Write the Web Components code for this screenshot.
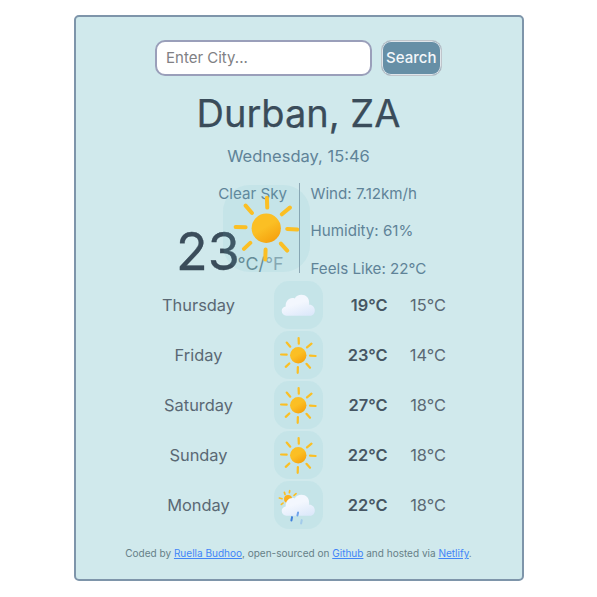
<!DOCTYPE html>
<html lang="en">
<head>
<meta charset="utf-8">
<title>Weather</title>
<style>
body{margin:0;background:#fff;font-family:Inter,"Liberation Sans",sans-serif;color:#5f8398}
</style>
</head>
<body>
<weather-app></weather-app>
<script>
const el = (name, html, setup) => customElements.define(name, class extends HTMLElement {
  constructor() {
    super();
    this.attachShadow({ mode: 'open' });
  }
  connectedCallback() {
    this.shadowRoot.innerHTML = html;
    if (setup) setup(this, this.shadowRoot);
  }
});

const rays = 'M132 38L133 68M201 68L177 88M193 132L223 134M174 176L193 197M128 194L127 224M82 174L63 192M68 127L38 126M68 62L87 84';
const cloud = 'M37 104C29 104 23 98 23 90C23 82 28 77 35 76C34 62 43 51 55 51C58 51 60 51 62 52C66 45 73 41 82 41C96 41 105 51 105 64L105 71C114 70 122 78 122 88C122 98 115 104 107 104Z';
const icons = {
  sun: `<svg viewBox="0 0 260 260"><defs><linearGradient id="s" x1=".2" y1="0" x2=".8" y2="1"><stop offset=".45" stop-color="#fbbf24"/><stop offset="1" stop-color="#f59e0b"/></linearGradient></defs><circle cx="130" cy="130" r="44" fill="url(#s)"/><path d="${rays}" fill="none" stroke="#fbbf24" stroke-width="12" stroke-linecap="round"/></svg>`,
  cloud: `<svg viewBox="0 0 145 145"><defs><linearGradient id="c" x1=".3" y1="0" x2=".8" y2="1"><stop offset=".4" stop-color="#f3f7fe"/><stop offset="1" stop-color="#dce8fa"/></linearGradient></defs><path d="${cloud}" fill="url(#c)"/></svg>`,
  rain: `<svg viewBox="0 0 145 145"><defs><linearGradient id="c" x1=".3" y1="0" x2=".8" y2="1"><stop offset=".4" stop-color="#f3f7fe"/><stop offset="1" stop-color="#dce8fa"/></linearGradient></defs><circle cx="42" cy="54" r="12" fill="#fbb01c"/><path d="M47 29L46 35M31 34L33 40M66 38L60 43M16 51L24 53M27 66L22 70" fill="none" stroke="#fbbf24" stroke-width="5" stroke-linecap="round"/><path d="${cloud}" fill="url(#c)"/><g fill="none" stroke-width="6" stroke-linecap="round"><path d="M54 108L52 118" stroke="#3f7fdc"/><path d="M72 94L70 103" stroke="#6ea4ea"/><path d="M83 117L81 127" stroke="#a3cbea"/></g></svg>`
};

el('weather-icon', `<style>
:host{display:block;width:48.5px;height:48.5px;border-radius:31%;background:rgba(110,190,198,.11)}
svg{display:block;width:100%;height:100%}
</style><div></div>`, (host, root) => {
  root.querySelector('div').innerHTML = icons[host.getAttribute('kind')];
});

el('search-bar', `<style>
:host{display:flex;gap:9px;height:35.5px}
input,button{box-sizing:border-box;margin:0;font:15px/20px Inter,sans-serif;border-radius:10px}
input{width:217px;padding:0 9.5px;border:2px solid #9a9fba;background:#fff}
input::placeholder{color:#808084;opacity:1}
button{width:61.5px;padding:0;border:1px solid #bfc5cb;box-shadow:inset 0 0 0 1px #dfe5ea;background:#668fa6;color:#f4f7fa;font-weight:500}
</style><input placeholder="Enter City..."><button>Search</button>`);

el('current-weather', `<style>
:host{display:grid;grid-template:90px / 224px 1fr;height:90px;font-size:15.15px;line-height:20px}
.left{position:relative;display:flex;flex-direction:column;align-items:flex-end;border-right:1px solid #8ba5b2;box-sizing:border-box;padding-top:.8px}
.desc{margin-right:11.5px}
.temp{display:flex;align-items:baseline;margin:18px 15px 0 0;line-height:60px}
.num{font-size:52px;color:#3a4c5a;margin-right:-2.3px;-webkit-text-stroke:.3px #3a4c5a}
.unit{font-size:17.8px;color:#648692}
.unit span{color:#8aa6b0}
weather-icon{position:absolute;left:147.7px;top:2.5px;width:86.5px;height:86.5px}
.right{display:flex;flex-direction:column;gap:17.5px;padding:.8px 0 0 11px}
</style><div class="left"><div class="desc">Clear Sky</div><div class="temp"><span class="num">23</span><span class="unit">°C/<span>°F</span></span></div><weather-icon kind="sun"></weather-icon></div>
<div class="right"><div>Wind: 7.12km/h</div><div>Humidity: 61%</div><div>Feels Like: 22°C</div></div>`);

el('forecast-day', `<style>
:host{display:grid;grid-template-columns:148px 52px 75.5px 46px;padding-left:49px;height:50px;align-items:center;font-size:16.4px;color:#5a6874}
.day{text-align:center}
.icon{display:flex;justify-content:center}
.hi{font-weight:600;color:#465663;text-align:right;padding-right:12.5px}
.lo{text-align:right}
</style><div class="day"><slot></slot></div><div class="icon"></div><div class="hi"></div><div class="lo"></div>`, (host, root) => {
  const [hi, lo] = host.getAttribute('temps').split(' ');
  root.querySelector('.icon').innerHTML = `<weather-icon kind="${host.getAttribute('kind')}"></weather-icon>`;
  root.querySelector('.hi').textContent = hi + '°C';
  root.querySelector('.lo').textContent = lo + '°C';
});

el('page-credit', `<style>
:host{display:block;text-align:center;font-size:10.03px;line-height:14px;color:#668087}
a{color:#4285f8;text-decoration:underline}
</style>Coded by <a href="#">Ruella Budhoo</a>, open-sourced on <a href="#">Github</a> and hosted via <a href="#">Netlify</a>.`);

el('weather-app', `<style>
:host{display:block;padding:14.5px 0 0 73.5px}
main{box-sizing:border-box;width:450px;height:566.5px;border:2px solid #7e95aa;border-radius:5px;background:#d0e9ec;padding-top:23.5px}
search-bar{margin-left:79px}
h1{margin:12px 0 0;font-size:38px;line-height:50px;font-weight:400;text-align:center;color:#3a4c5a;-webkit-text-stroke:.25px #3a4c5a}
.date{font-size:16.5px;line-height:20px;text-align:center;margin:8.5px 0 16.9px}
.days{margin-top:7.1px}
page-credit{margin-top:16px}
</style><main>
<search-bar></search-bar>
<h1>Durban, ZA</h1>
<div class="date">Wednesday, 15:46</div>
<current-weather></current-weather>
<div class="days">
<forecast-day kind="cloud" temps="19 15">Thursday</forecast-day>
<forecast-day kind="sun" temps="23 14">Friday</forecast-day>
<forecast-day kind="sun" temps="27 18">Saturday</forecast-day>
<forecast-day kind="sun" temps="22 18">Sunday</forecast-day>
<forecast-day kind="rain" temps="22 18">Monday</forecast-day>
</div>
<page-credit></page-credit>
</main>`);
</script>
</body>
</html>
